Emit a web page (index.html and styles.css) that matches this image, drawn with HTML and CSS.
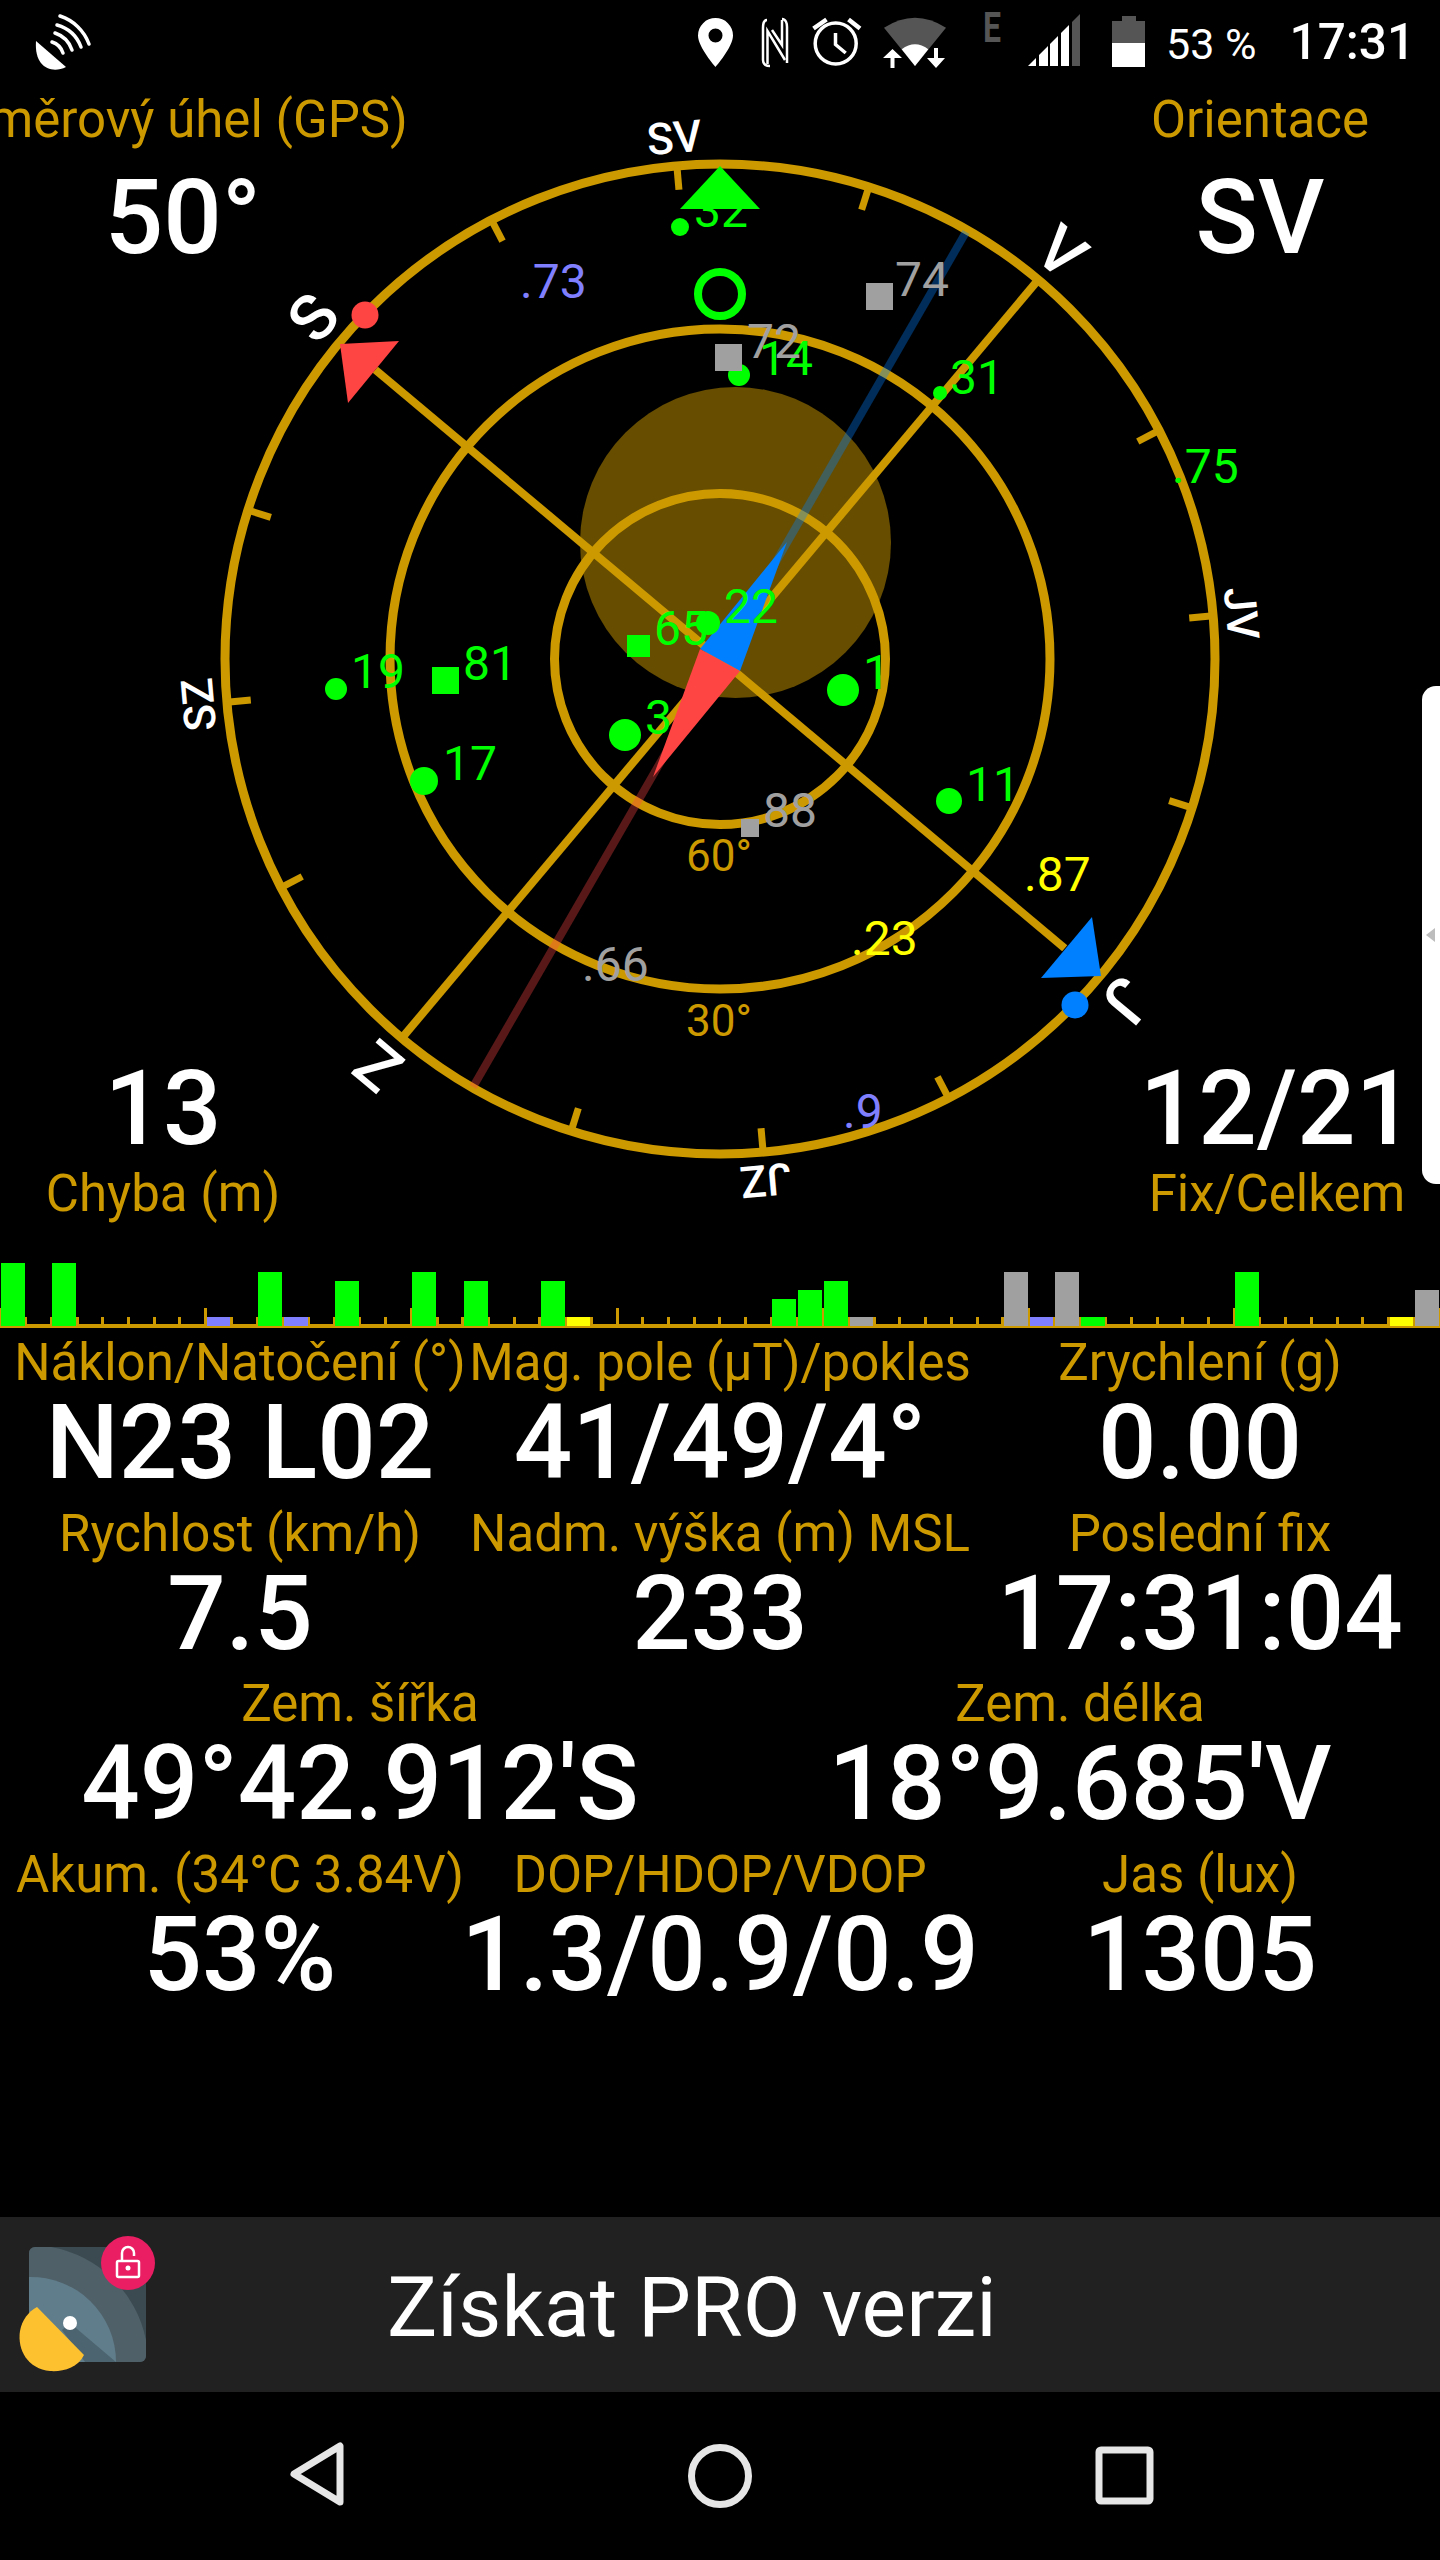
FILE: index.html
```html
<!DOCTYPE html>
<html lang="cs">
<head>
    <meta charset="UTF-8">
    <meta name="viewport" content="width=device-width, initial-scale=1.0">
    <title>GPS Test</title>
    <link rel="stylesheet" href="styles.css">
</head>
<body>
<div class="app">

    <!-- Status bar -->
    <div class="statusbar">
        <svg class="status-cast" viewBox="30 10 70 65" width="70" height="65">
            <path class="fill-white" d="M36 41 L66 67 C52 74 34 68 36 41Z"/>
            <g class="cast-arcs">
                <path d="M60 16 A46 46 0 0 1 89 44"/>
                <path d="M57 25 A36 36 0 0 1 81 47"/>
                <path d="M55 33 A27 27 0 0 1 72 50"/>
                <path d="M52 42 A17 17 0 0 1 63 53"/>
            </g>
        </svg>
        <svg class="status-icons" viewBox="698 0 447 84" width="447" height="84">
            <!-- pin -->
            <path class="fill-white" fill-rule="evenodd" d="M715.5 18 A17.5 17.5 0 0 1 733 35.5 C733 47 715.5 67 715.5 67 C715.5 67 698 47 698 35.5 A17.5 17.5 0 0 1 715.5 18Z M715.5 28.500 A7 7 0 1 0 715.500 42.500 A7 7 0 1 0 715.500 28.500Z"/>
            <!-- nfc -->
            <g class="nfc">
                <path d="M767 20 C763 20 763 25 763 28 V60 C763 64 766 66 770 66"/>
                <path d="M782 19 C786 19 787 24 787 27 V63"/>
                <path d="M767.500 64 V31 L785 60"/>
                <path d="M772 30 L782 45 V20"/>
            </g>
            <!-- alarm -->
            <g class="alarm">
                <circle cx="835.700" cy="43.500" r="20.500"/>
                <path class="alarm-hand" d="M835.500 33 V44.500 L845.700 53"/>
                <path class="alarm-bell" d="M813.500 28.500 L826.500 19.500 M848.500 19.500 L860 28.500"/>
            </g>
            <!-- wifi -->
            <path class="fill-dim" d="M915 66 L884 27.700 Q915 7.700 946 27.700Z"/>
            <path class="fill-white" d="M915 66 L901.700 49.300 Q915 39.300 928.300 49.300Z"/>
            <path class="fill-white" d="M892.500 49 L902 58 H894.500 V68 H890.500 V58 H883Z"/>
            <path class="fill-white" d="M936 68 L927 58 H934 V48 H938 V58 H945Z"/>
            <!-- mobile data + signal -->
            <text class="status-e" x="983" y="42" textLength="18" lengthAdjust="spacingAndGlyphs">E</text>
            <path class="fill-white" d="M1028 66 L1036 58 V66Z M1039 55 L1048 46 V66 H1039Z M1050 44 L1058 36 V66 H1050Z M1061 33 L1069 25 V66 H1061Z"/>
            <path class="fill-dim" d="M1072 22 L1080 14 V66 H1072Z"/>
            <!-- battery -->
            <path class="fill-dim" d="M1122 16 H1136 V21 H1145 V43 H1112 V21 H1122Z"/>
            <rect class="fill-white" x="1112" y="43" width="33" height="24"/>
        </svg>
        <span class="status-battery">53 %</span>
        <span class="status-time">17:31</span>
    </div>

    <!-- Sky view -->
    <div class="sky">
        <svg class="radar" viewBox="0 84 1440 1156" width="1440" height="1156">
            <circle class="accuracy" cx="735.500" cy="542.500" r="155.500"/>

            <g class="rings">
                <circle cx="720" cy="659" r="495"/>
                <circle cx="720" cy="659" r="330"/>
                <circle cx="720" cy="659" r="165.500"/>
            </g>

            <g class="ticks">
                <line x1="720" y1="164" x2="720" y2="188" transform="rotate(-5 720 659)"/>
                <line x1="720" y1="164" x2="720" y2="188" transform="rotate(17.500 720 659)"/>
                <line x1="720" y1="164" x2="720" y2="188" transform="rotate(62.500 720 659)"/>
                <line x1="720" y1="164" x2="720" y2="188" transform="rotate(85 720 659)"/>
                <line x1="720" y1="164" x2="720" y2="188" transform="rotate(107.500 720 659)"/>
                <line x1="720" y1="164" x2="720" y2="188" transform="rotate(152.500 720 659)"/>
                <line x1="720" y1="164" x2="720" y2="188" transform="rotate(175 720 659)"/>
                <line x1="720" y1="164" x2="720" y2="188" transform="rotate(197.500 720 659)"/>
                <line x1="720" y1="164" x2="720" y2="188" transform="rotate(242.500 720 659)"/>
                <line x1="720" y1="164" x2="720" y2="188" transform="rotate(265 720 659)"/>
                <line x1="720" y1="164" x2="720" y2="188" transform="rotate(287.500 720 659)"/>
                <line x1="720" y1="164" x2="720" y2="188" transform="rotate(332.500 720 659)"/>
            </g>
            <g class="axes">
                <line x1="720" y1="164" x2="720" y2="659" transform="rotate(40 720 659)"/>
                <line x1="720" y1="164" x2="720" y2="659" transform="rotate(220 720 659)"/>
                <line x1="720" y1="209" x2="720" y2="1109" transform="rotate(130 720 659)"/>
            </g>

            <g class="heading-line">
                <line class="line-blue" x1="720" y1="659" x2="966" y2="232"/>
                <line class="line-red" x1="720" y1="659" x2="473" y2="1087"/>
            </g>

            <g class="elev">
                <text x="686" y="871">60°</text>
                <text x="686" y="1036">30°</text>
            </g>

            <g class="dirs">
                <text x="720" y="151" transform="rotate(-5 720 659)">SV</text>
                <text class="dir-main" x="720" y="150" transform="rotate(40 720 659)">V</text>
                <text x="720" y="151" transform="rotate(85 720 659)">JV</text>
                <text class="dir-main" x="720" y="150" transform="rotate(130 720 659)">J</text>
                <text x="720" y="151" transform="rotate(175 720 659)">JZ</text>
                <text class="dir-main" x="720" y="150" transform="rotate(220 720 659)">Z</text>
                <text x="720" y="151" transform="rotate(265 720 659)">SZ</text>
                <text class="dir-main" x="720" y="150" transform="rotate(310 720 659)">S</text>
            </g>

            <!-- needle -->
            <polygon class="blue" points="787,542 740,671 700,649"/>
            <polygon class="red" points="653,777 740,671 700,649"/>

            <!-- satellites -->
            <g class="sat-green">
                <circle cx="680" cy="227" r="9"/><text x="694" y="227">32</text>
                <circle cx="739" cy="375" r="11"/><text x="759" y="375">14</text>
                <circle cx="940" cy="393" r="7"/><text x="950" y="394">31</text>
                <text x="1172" y="483">.75</text>
                <rect x="627" y="635" width="23" height="22"/><text x="654" y="645">65</text>
                <circle cx="708" cy="623" r="12"/><text x="724" y="623">22</text>
                <rect x="432" y="667" width="27" height="27"/><text x="463" y="680">81</text>
                <circle cx="336" cy="689" r="11"/><text x="351" y="688">19</text>
                <circle cx="424" cy="781" r="14"/><text x="443" y="780">17</text>
                <circle cx="625" cy="735" r="16"/><text x="645" y="734">3</text>
                <circle cx="843" cy="690" r="16"/><text x="863" y="689">1</text>
                <circle cx="949" cy="801" r="13"/><text x="966" y="801">11</text>
            </g>
            <g class="sat-gray">
                <rect x="866" y="283" width="27" height="27"/><text x="895" y="296">74</text>
                <rect x="715" y="344" width="27" height="27"/><text x="747" y="358">72</text>
                <rect x="741" y="819" width="18" height="18"/><text x="763" y="827">88</text>
                <text x="582" y="981">.66</text>
            </g>
            <g class="sat-purple">
                <text x="520" y="298">.73</text>
                <text x="843" y="1128">.9</text>
            </g>
            <g class="sat-yellow">
                <text x="1024" y="891">.87</text>
                <text x="851" y="955">.23</text>
            </g>

            <!-- markers -->
            <polygon class="green" points="720,166 680,209 760,209"/>
            <circle class="target" cx="720" cy="294" r="22"/>
            <polygon class="red" points="340,344 399,341 348,403"/>
            <circle class="red" cx="365" cy="315" r="13.500"/>
            <polygon class="blue" points="1092,917 1041,978 1101,976"/>
            <circle class="blue" cx="1075" cy="1005" r="13.500"/>
        </svg>

        <div class="corner-row">
            <div class="corner corner-bearing">
                <span class="label">Směrový úhel (GPS)</span>
                <span class="value">50°</span>
            </div>
            <div class="corner corner-orient">
                <span class="label">Orientace</span>
                <span class="value">SV</span>
            </div>
        </div>
        <div class="corner-row">
            <div class="corner corner-error">
                <span class="value">13</span>
                <span class="label">Chyba (m)</span>
            </div>
            <div class="corner corner-fix">
                <span class="value">12/21</span>
                <span class="label">Fix/Celkem</span>
            </div>
        </div>

        <div class="side-handle"><span class="handle-arrow"></span></div>
    </div>

    <!-- Signal bars -->
    <div class="bars">
        <div class="bar b-green" style="grid-column:1;height:63px"></div>
        <div class="bar b-green" style="grid-column:3;height:63px"></div>
        <div class="bar b-purple" style="grid-column:9;height:9px"></div>
        <div class="bar b-green" style="grid-column:11;height:54px"></div>
        <div class="bar b-purple" style="grid-column:12;height:9px"></div>
        <div class="bar b-green" style="grid-column:14;height:45px"></div>
        <div class="bar b-green" style="grid-column:17;height:54px"></div>
        <div class="bar b-green" style="grid-column:19;height:45px"></div>
        <div class="bar b-green" style="grid-column:22;height:45px"></div>
        <div class="bar b-yellow" style="grid-column:23;height:9px"></div>
        <div class="bar b-green" style="grid-column:31;height:27px"></div>
        <div class="bar b-green" style="grid-column:32;height:36px"></div>
        <div class="bar b-green" style="grid-column:33;height:45px"></div>
        <div class="bar b-gray" style="grid-column:34;height:9px"></div>
        <div class="bar b-gray" style="grid-column:40;height:54px"></div>
        <div class="bar b-purple" style="grid-column:41;height:9px"></div>
        <div class="bar b-gray" style="grid-column:42;height:54px"></div>
        <div class="bar b-green" style="grid-column:43;height:9px"></div>
        <div class="bar b-green" style="grid-column:49;height:54px"></div>
        <div class="bar b-yellow" style="grid-column:55;height:9px"></div>
        <div class="bar b-gray" style="grid-column:56;height:36px"></div>
    </div>

    <!-- Readouts -->
    <div class="data">
        <div class="row">
            <div class="cell"><span class="label">Náklon/Natočení (°)</span><span class="value">N23 L02</span></div>
            <div class="cell"><span class="label">Mag. pole (µT)/pokles</span><span class="value">41/49/4°</span></div>
            <div class="cell"><span class="label">Zrychlení (g)</span><span class="value">0.00</span></div>
        </div>
        <div class="row">
            <div class="cell"><span class="label">Rychlost (km/h)</span><span class="value">7.5</span></div>
            <div class="cell"><span class="label">Nadm. výška (m) MSL</span><span class="value">233</span></div>
            <div class="cell"><span class="label">Poslední fix</span><span class="value">17:31:04</span></div>
        </div>
        <div class="row row-two">
            <div class="cell"><span class="label">Zem. šířka</span><span class="value">49°42.912'S</span></div>
            <div class="cell"><span class="label">Zem. délka</span><span class="value">18°9.685'V</span></div>
        </div>
        <div class="row">
            <div class="cell"><span class="label">Akum. (34°C 3.84V)</span><span class="value">53%</span></div>
            <div class="cell"><span class="label">DOP/HDOP/VDOP</span><span class="value">1.3/0.9/0.9</span></div>
            <div class="cell"><span class="label">Jas (lux)</span><span class="value">1305</span></div>
        </div>
    </div>

    <!-- Promo -->
    <div class="promo">
        <svg class="promo-logo" viewBox="10 2225 160 160" width="160" height="160">
            <rect x="29" y="2247" width="117" height="115" rx="6" fill="#3b4a50"/>
            <path d="M29 2253 a6 6 0 0 1 6 -6 H51 A118 118 0 0 1 146 2340 V2356 a6 6 0 0 1 -6 6 H29Z" fill="#4f6068"/>
            <path d="M29 2277 A85 85 0 0 1 116 2362 H29Z" fill="#607d8b"/>
            <path d="M70 2323 L116 2362 H85 L62 2330Z" fill="#4c6470"/>
            <circle cx="70" cy="2323" r="7" fill="#fff"/>
            <path d="M37 2307 L84 2355 C78 2368 62 2372 50 2371 C28 2369 17 2350 20 2331 C22 2320 28 2312 37 2307Z" fill="#fdc02f"/>
            <circle cx="128" cy="2263" r="27" fill="#e91e63"/>
            <rect class="lock" x="117" y="2261" width="22" height="16" rx="1.500"/>
            <path class="lock" d="M122 2261 V2253 a6 6 0 0 1 12 0 V2256"/>
            <circle cx="128" cy="2268" r="2.500" fill="#fff"/>
        </svg>
        <span class="promo-text">Získat PRO verzi</span>
    </div>

    <!-- Nav bar -->
    <div class="navbar">
        <svg viewBox="0 0 70 70" width="70" height="70"><path class="nav-icon" d="M59 5 V61 L13 33Z"/></svg>
        <svg viewBox="0 0 70 70" width="70" height="70"><circle class="nav-icon" cx="35" cy="35" r="28.500"/></svg>
        <svg viewBox="0 0 70 70" width="70" height="70"><rect class="nav-icon" x="10" y="9" width="51" height="51" rx="2"/></svg>
    </div>

</div>
</body>
</html>
```

FILE: styles.css
```css
/* General styling */
body {
    margin: 0;
    background-color: #000;
    font-family: Roboto, Arial, sans-serif;
    color: #fff;
}

.app {
    width: 1440px;
    height: 2560px;
    display: flex;
    flex-direction: column;
    overflow: hidden;
}

.label {
    color: #cc9900;
    font-size: 51px;
    line-height: 56px;
    white-space: nowrap;
}

.value {
    font-size: 103px;
    font-weight: 500;
    line-height: 104px;
    white-space: nowrap;
}

/* Status bar */
.statusbar {
    height: 84px;
    flex-shrink: 0;
    display: flex;
    align-items: flex-start;
}

.status-cast {
    margin-left: 30px;
    margin-top: 10px;
}

.status-icons {
    margin-left: 598px;
}

.status-battery {
    margin-left: 21px;
    margin-top: 19px;
    font-size: 43px;
    line-height: 50px;
}

.status-time {
    margin-left: 33px;
    margin-top: 13px;
    font-size: 49.5px;
    font-weight: 500;
    line-height: 58px;
}

.fill-white { fill: #fff; }
.fill-dim { fill: #555; }

.cast-arcs path {
    fill: none;
    stroke: #fff;
    stroke-width: 3.5;
    stroke-linecap: round;
}

.nfc path {
    fill: none;
    stroke: #fff;
    stroke-width: 2.5;
}

.alarm circle,
.alarm-hand,
.alarm-bell {
    fill: none;
    stroke: #fff;
    stroke-width: 3.5;
}

.alarm-bell { stroke-width: 4.5; }

.status-e {
    fill: #555;
    font-size: 42px;
    font-weight: 700;
}

/* Sky view */
.sky {
    position: relative;
    height: 1156px;
    flex-shrink: 0;
    display: flex;
    flex-direction: column;
    justify-content: space-between;
    padding: 8px 0 18px;
    box-sizing: border-box;
}

.radar {
    position: absolute;
    top: 0;
    left: 0;
}

.accuracy { fill: #664d00; }

.rings circle {
    fill: none;
    stroke: #cc9900;
    stroke-width: 9;
}

.ticks line {
    stroke: #cc9900;
    stroke-width: 7;
}

.axes line {
    stroke: #cc9900;
    stroke-width: 8;
}

.heading-line line { stroke-width: 8; }
.line-blue { stroke: rgba(0, 128, 255, 0.35); }
.line-red { stroke: rgba(255, 68, 68, 0.35); }

.elev text {
    fill: #cc9900;
    font-size: 44px;
}

.dirs text {
    fill: #fff;
    font-size: 44px;
    font-weight: 500;
    text-anchor: middle;
}

.dirs .dir-main {
    font-size: 64px;
}

.blue { fill: #0080ff; }
.red { fill: #ff4444; }
.green { fill: #00ff00; }

.sat-green { fill: #00ff00; }
.sat-gray { fill: #a0a0a0; }
.sat-purple { fill: #8080ff; }
.sat-yellow { fill: #ffff00; }

.sat-green text,
.sat-gray text,
.sat-purple text,
.sat-yellow text {
    font-size: 48px;
}

.target {
    fill: none;
    stroke: #00ff00;
    stroke-width: 8;
}

.corner-row {
    position: relative;
    display: flex;
    justify-content: space-between;
}

.corner {
    display: flex;
    flex-direction: column;
    align-items: center;
}

.corner .value { margin-bottom: 5px; }
.corner .label + .value { margin-top: 18px; }

.corner-bearing { width: 366px; }
.corner-orient { width: 360px; }
.corner-error { width: 326px; }
.corner-fix { width: 326px; }

.side-handle {
    position: absolute;
    top: 602px;
    right: 0;
    width: 18px;
    height: 498px;
    background-color: #fff;
    border-radius: 14px 0 0 14px;
    display: flex;
    align-items: center;
}

.handle-arrow {
    margin-left: 4px;
    border-top: 7px solid transparent;
    border-bottom: 7px solid transparent;
    border-right: 9px solid #bdbdbd;
}

/* Signal bars */
.bars {
    height: 88px;
    flex-shrink: 0;
    box-sizing: border-box;
    display: grid;
    grid-template-columns: repeat(56, 1fr);
    align-items: end;
    padding-bottom: 2px;
    background-image:
        linear-gradient(#cc9900, #cc9900),
        repeating-linear-gradient(to right, #cc9900 0, #cc9900 1.5px, transparent 1.5px, transparent 204.21px, #cc9900 204.21px, #cc9900 205.71px),
        repeating-linear-gradient(to right, #cc9900 0, #cc9900 1.5px, transparent 1.5px, transparent 24.21px, #cc9900 24.21px, #cc9900 25.714px);
    background-size: 100% 4px, 100% 18px, 100% 9px;
    background-position: 0 84px, 0 68px, 0 77px;
    background-repeat: no-repeat;
}

.bar {
    margin: 0 1px;
}

.b-green { background-color: #00ff00; }
.b-purple { background-color: #8080ff; }
.b-yellow { background-color: #ffff00; }
.b-gray { background-color: #a0a0a0; }

/* Readouts */
.data {
    padding-top: 7px;
}

.row {
    display: grid;
    grid-template-columns: repeat(3, 1fr);
    height: 170.5px;
}

.row-two {
    grid-template-columns: repeat(2, 1fr);
}

.cell {
    display: flex;
    flex-direction: column;
    align-items: center;
    min-width: 0;
}

/* Promo */
.promo {
    margin-top: auto;
    height: 175px;
    flex-shrink: 0;
    background-color: #212121;
    display: flex;
    align-items: center;
    padding-left: 10px;
}

.promo-text {
    margin-left: 217px;
    margin-top: 5px;
    font-size: 84px;
    white-space: nowrap;
}

.lock {
    fill: none;
    stroke: #fff;
    stroke-width: 2.5;
}

/* Nav bar */
.navbar {
    height: 168px;
    flex-shrink: 0;
    display: flex;
    align-items: center;
    justify-content: center;
    gap: 334px;
}

.nav-icon {
    fill: none;
    stroke: #e6e6e6;
    stroke-width: 7;
    stroke-linejoin: round;
}
```
